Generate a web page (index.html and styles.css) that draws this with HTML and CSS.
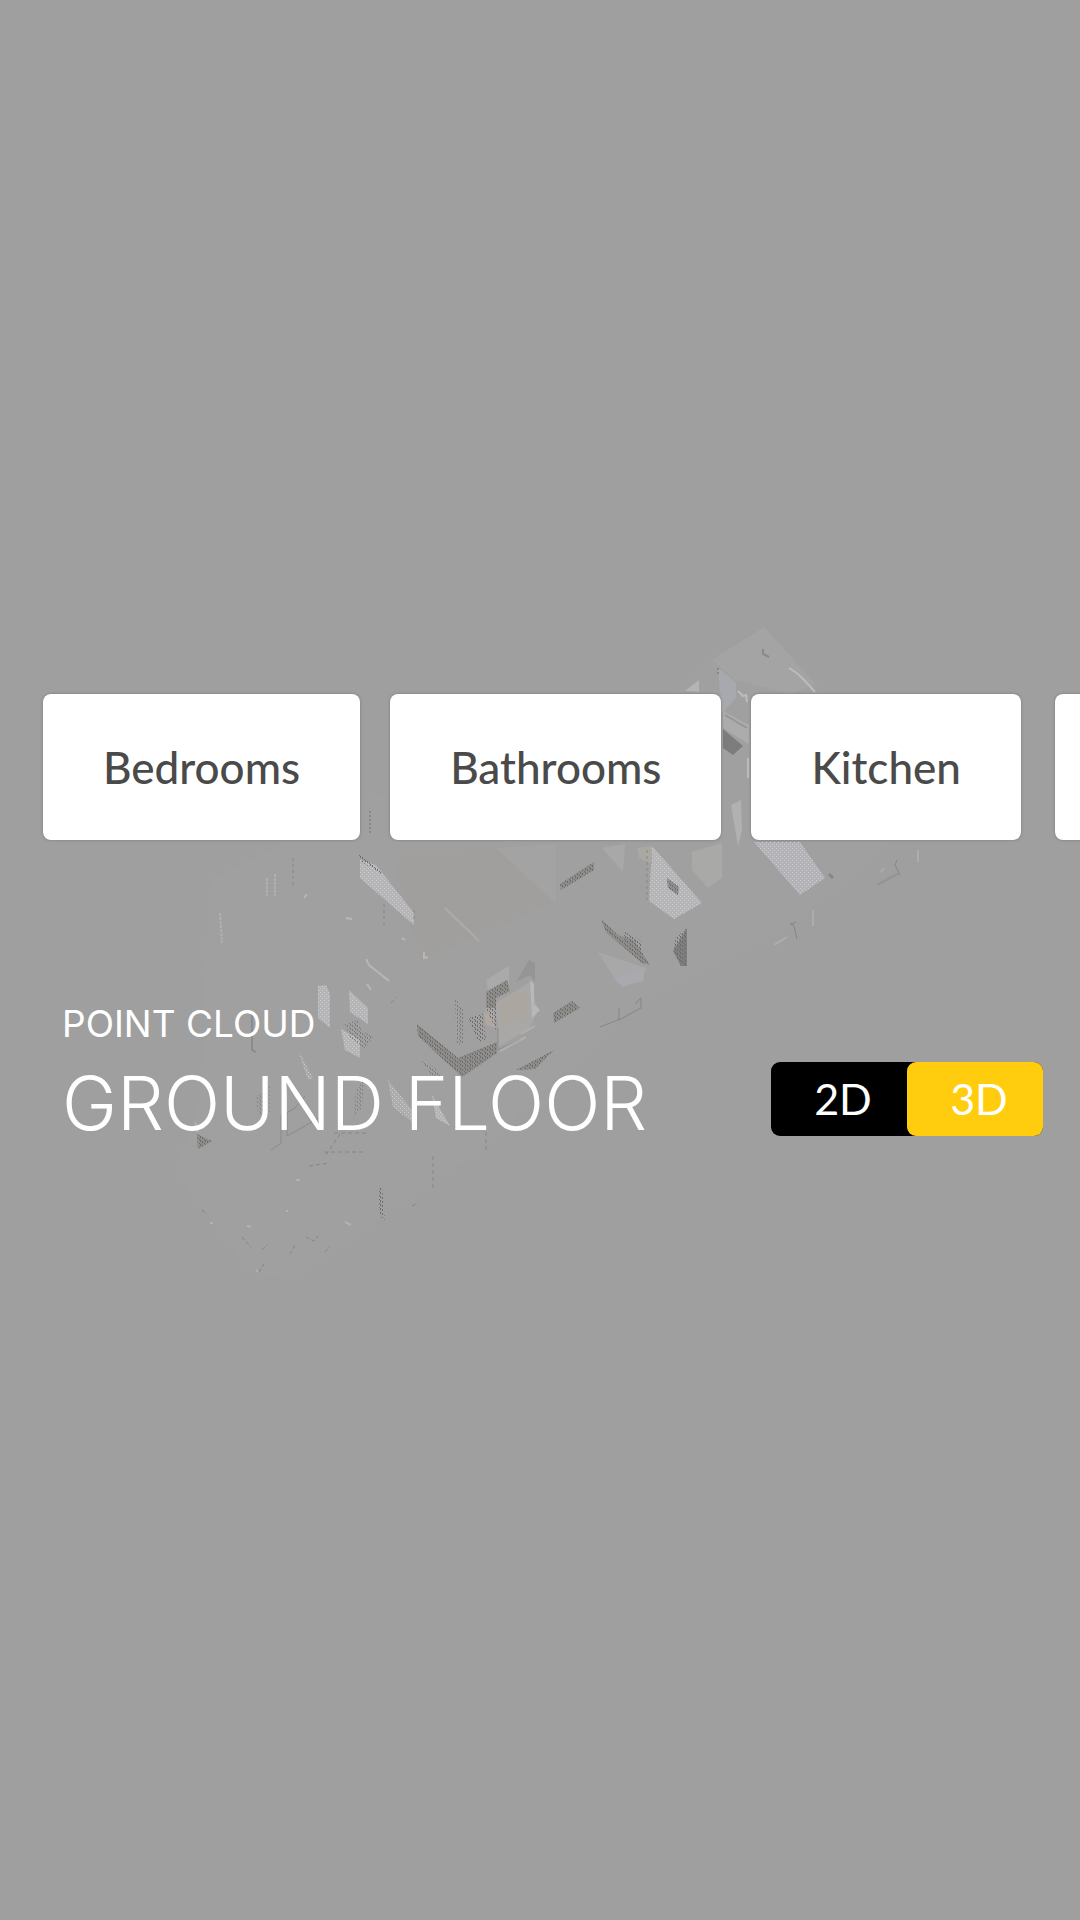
FILE: index.html
```html
<!DOCTYPE html>
<html lang="en">
<head>
<meta charset="utf-8">
<meta name="viewport" content="width=device-width, initial-scale=1">
<title>Ground Floor – Point Cloud</title>
<link rel="stylesheet" href="styles.css">
</head>
<body>
<svg class="scene" viewBox="0 0 1080 1920" preserveAspectRatio="xMidYMid slice" aria-hidden="true">
  <defs>
    <pattern id="dark" width="5" height="4" patternUnits="userSpaceOnUse"><path d="M0 0h1v2h-1zM2 1h1v2h-1zM4 3h1v1h-1z" fill="#6c6c6c"/></pattern>
    <pattern id="light" width="4" height="4" patternUnits="userSpaceOnUse"><path d="M0 0h1v1h-1zM2 2h1v1h-1z" fill="#cdcdd0"/></pattern>
  </defs>
  <!-- floor slabs -->
  <g fill="#a2a2a1">
    <path d="M712 660L764 627L819 684L900 830L800 920L640 1000L480 1150L290 1280L250 1270L175 1170L200 1100L210 880L370 800L640 720Z" opacity=".6"/>
    <path d="M500 848L556 900L492 930L420 960L390 850Z" fill="#a09f9e"/>
    <path d="M556 844v60l-60-56z" fill="#a3a3a3"/>
    <path d="M205 1145L285 1238L500 1160L460 1110Z" fill="#a19f9f" opacity=".7"/>
    <path d="M445 908l34 33" stroke="#acacac" stroke-width="2"/>
  </g>
  <!-- upper rooms -->
  <path d="M712 660L764 627L815 684L790 694L735 680Z" fill="#a4a4a4"/>
  <path d="M718 668L736 682V698L722 713Z" fill="#a8a9ae"/>
  <path d="M685 691L699 680V692Z" fill="#b4b4b4"/>
  <path d="M723 711L749 725V744L723 728Z" fill="#acacac"/>
  <path d="M723 729L743 746L733 755L723 748Z" fill="#7c7c7c"/>
  <path d="M731 805L741 800L742 830L738 846Z" fill="#b1b1b1"/>
  <g fill="none" stroke-width="2">
    <path d="M789 668l9 6 9 9 8 9M738 691l5 5 3-1 1 7M748 758v20" stroke="#bcbcbc"/>
    <path d="M763 649v5l6 3" stroke="#898989"/>
    <path d="M718 668v8M370 811v22" stroke="#888" stroke-dasharray="2 2"/>
    <path d="M725 715l22 13" stroke="#969696"/>
  </g>
  <!-- wall panels -->
  <g fill="#b5b5b8">
    <path d="M360 860L376 865L414 913V925L360 878Z"/>
    <path d="M652 846L702 903L674 919L649 901Z"/>
    <path d="M754 842H800L825 878L800 895Z" fill="#b3b3b7"/>
    <path d="M692 852L722 843V878L708 888L692 870Z" fill="#a9a9a8"/>
    <path d="M602 848L625 844L623 872Z" fill="#a8a8a9"/>
    <path d="M318 986L326 985L330 994V1028L318 1018Z"/>
    <path d="M349 990L368 1008V1024L350 1012Z"/>
    <path d="M341 1029L360 1040V1058L345 1050Z"/>
    <path d="M298 1050L313 1078L308 1080Z" fill="#ababab"/>
    <path d="M388 1080L412 1110L412 1122L393 1107Z" fill="#adadad"/>
    <path d="M432 1095L450 1126L436 1118Z"/>
    <path d="M486 980L509 966V984L488 990Z" fill="#aaa"/>
    <path d="M598 952L646 968L642 982L618 984Z" fill="#a9a8a9"/>
    <path d="M616 978L642 968L644 980L622 987Z" fill="#a9a9b0"/>
  </g>
  <g fill="url(#light)">
    <path d="M360 860L376 865L414 913V925L360 878Z"/>
    <path d="M652 846L702 903L674 919L649 901Z"/>
    <path d="M754 842H800L825 878L800 895Z"/>
    <path d="M318 986L326 985L330 994V1028L318 1018Z"/>
    <path d="M349 990L368 1008V1024L350 1012Z"/>
    <path d="M341 1029L360 1040V1058L345 1050Z"/>
    <path d="M298 1050L313 1078L308 1080Z"/>
    <path d="M388 1080L412 1110L412 1122L393 1107Z"/>
    <path d="M432 1095L450 1126L436 1118Z"/>
  </g>
  <path d="M637 848l15-2 0 18-13-6z" fill="#aba8a1"/>
  <path d="M484 1010L530 982L538 1010L530 1028L498 1047L498 1020Z" fill="#aaa8a6"/>
  <path d="M500 1002l28-12-1 26-26 12z" fill="#aca6a0"/>
  <path d="M484 1012l10 4 2 12-10-3z" fill="#b1a6a1"/>
  <path d="M530 980l4 4 0 20 6 6-8 8z" fill="#b8b8b8"/>
  <!-- dark walls -->
  <g fill="#8e8d8a">
    <path d="M417 1024L458 1058L497 1042V1053L462 1077L418 1036Z"/>
    <path d="M601 919L618 935L634 940L650 965L642 963L606 932Z"/>
    <path d="M553 1013L572 1001L580 1008L554 1023Z"/>
    <path d="M687 928V966L681 966L673 951Z" fill="#7f7f7f"/>
    <path d="M667 878L679 887L678 895L668 888Z" fill="#909090"/>
    <path d="M560 884L594 862V870L561 890Z"/>
    <path d="M486 992L507 980L510 991L496 998V1008L486 1008Z"/>
    <path d="M529 960L535 963V982L530 975L516 982Z" opacity=".6"/>
    <path d="M516 1070L554 1050L535 1069Z"/>
    <path d="M197 1134l4 2 11 5-14 8z"/>
  </g>
  <g fill="url(#dark)">
    <path d="M417 1024L458 1058L497 1042V1053L462 1077L418 1036Z"/>
    <path d="M455 998L463 1010V1044H457Z" opacity=".7"/>
    <path d="M601 919L623 940L625 932L640 940L643 955L650 965L642 963L606 932Z"/>
    <path d="M553 1013L572 1001L580 1008L554 1023Z"/>
    <path d="M687 928V966L681 966L673 951L676 937Z"/>
    <path d="M667 878L679 887L678 895L668 888Z"/>
    <path d="M560 884L594 862V870L561 890Z"/>
    <path d="M486 992L507 980L510 991L496 998V1030L486 1008Z"/>
    <path d="M468 1018L483 1014L486 1040L478 1042Z"/>
    <path d="M516 1070L554 1050L535 1069Z"/>
    <path d="M197 1134l4 2 11 5-14 8z"/>
    <path d="M345 1024l13-4 3 10 12 7-8 12-15-12z" opacity=".7"/>
    <path d="M256 1098l14-14v28l-12 4z" opacity=".5"/>
    <path d="M356 1090l8-10-2 28-8 8z" opacity=".5"/>
    <path d="M421 1060l14 8 8 12-10-3z" opacity=".7"/>
    <path d="M358 853l10 8 14 10-2 3-18-12z"/>
    <path d="M378 1188l4 0 3 32-5-4z"/>
  </g>
  <!-- stray edges -->
  <g fill="none" stroke="#868686">
    <path d="M498 1028v22l22-10M271 1150l10-7v-28l6-3v24l32-18M281 1116l14-8 10-12" stroke="#8a8a8a"/>
    <path d="M293 858v30M384 904v24M414 910v12M647 850v50" stroke-dasharray="3 3"/>
    <path d="M619 1008v12l22-12v-10l-6 6M600 1027l20-8"/>
    <path d="M790 922l4 4 3 13M790 925l6-3M897 860l-2 5 5 10"/>
    <path d="M829 874l4 4" stroke-width="3"/>
    <path d="M252 1012v38l4 2" stroke="#8b8b8b" stroke-width="2"/>
    <path d="M391 1003l6-6M433 1156v34M486 1132v18M324 1152h42M334 1133h34M340 1134l-16 24M309 1166l20-3" stroke-dasharray="4 3"/>
    <path d="M242 1237l9 10M262 1250l5-5M290 1254l5-9M306 1237l8 4 4-5M325 1252l5-6M412 1206l6-3M202 1210l4 3M259 1272l5-8" stroke-dasharray="4 2"/>
  </g>
  <g fill="none" stroke="#b7b7b7" stroke-width="2">
    <path d="M267 878v18M275 874v22M220 913l2 30" stroke-dasharray="3 1" opacity=".7"/>
    <path d="M366 959l3 6 20 16M402 938l3 2M346 918l6 1M304 898l3-4M424 952v6l4-1M367 984l4 6"/>
    <path d="M774 945l13-8M813 910v16M918 850v12M881 872l3-4" opacity=".6"/>
    <path d="M247 1226l4 1M210 1223h3M345 1222l6 3M256 1270l2 2M286 1211l2 0M300 1180h-4" opacity=".8"/>
    <path d="M535 1026l-14 8M500 1051l26-14M195 1122l3 10" opacity=".7"/>
    <path d="M877 885l22-12" stroke="#949494"/>
  </g>
</svg>
<main class="viewer">
  <nav class="rooms" aria-label="Rooms">
    <button class="room" type="button">Bedrooms</button>
    <button class="room" type="button">Bathrooms</button>
    <button class="room" type="button">Kitchen</button>
    <button class="room room-next" type="button" aria-label="Next room"></button>
  </nav>
  <section class="caption">
    <div class="heading">
      <p class="kicker">POINT CLOUD</p>
      <h1 class="title">GROUND FLOOR</h1>
    </div>
    <div class="toggle" role="group" aria-label="View mode">
      <button class="mode" type="button" aria-pressed="false">2D</button>
      <button class="mode mode-active" type="button" aria-pressed="true">3D</button>
    </div>
  </section>
</main>
</body>
</html>
```
FILE: styles.css
```css
* { box-sizing: border-box; }

body {
  margin: 0;
  background: #9f9f9f;
  color: #fff;
  font-family: Inter, "Liberation Sans", sans-serif;
  overflow-x: hidden;
}

button {
  margin: 0;
  border: 0;
  font: inherit;
  cursor: pointer;
}

.scene {
  position: absolute;
  inset: 0;
  width: 100%;
  height: 100%;
}

.viewer {
  position: relative;
  min-height: 100vh;
  padding-bottom: 68px;
  display: flex;
  flex-direction: column;
  justify-content: center;
  gap: 160px;
  overflow: hidden;
}

.rooms {
  display: flex;
  gap: 30px;
  padding-left: 43px;
}

.room {
  flex: none;
  height: 146px;
  padding: 0 60px;
  border-radius: 8px;
  background: #fff;
  color: #4a4a4a;
  font-family: Lato, "Liberation Sans", sans-serif;
  font-size: 44px;
  font-weight: 500;
  line-height: 52px;
  box-shadow: 0 0 3px #777;
}

.room-next {
  width: 260px;
  margin-left: 4px;
}

.caption {
  display: flex;
  justify-content: space-between;
  align-items: flex-end;
  padding: 0 37px 0 62px;
}

.kicker {
  margin: 0;
  font-size: 37px;
  line-height: 48px;
}

.title {
  margin: 0;
  font-size: 74px;
  font-weight: 300;
  line-height: 110px;
}

.toggle {
  display: flex;
  margin-bottom: 22px;
  border-radius: 9px;
  background: #000;
}

.mode {
  width: 136px;
  height: 74px;
  padding: 0 0 0 8px;
  border-radius: 9px;
  background: transparent;
  color: #fff;
  font-family: Lato, "Liberation Sans", sans-serif;
  font-size: 43px;
  line-height: 52px;
}

.mode-active {
  background: #ffcc0e;
}
```
